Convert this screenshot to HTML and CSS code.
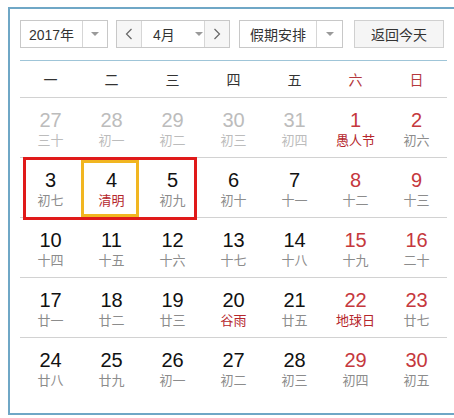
FILE: index.html
```html
<!DOCTYPE html>
<html lang="zh-CN">
<head>
<meta charset="utf-8">
<link rel="stylesheet" href="styles.css">
</head>
<body>
<div class="frame">
  <div class="toolbar">
    <div class="select year"><span class="label">2017年</span><span class="drop"><i class="tri"></i></span></div>
    <div class="month">
      <span class="nav"><svg width="8" height="12" viewBox="0 0 8 12"><polyline points="6.5,1 1.5,6 6.5,11" fill="none" stroke="#666" stroke-width="1.2"/></svg></span>
      <span class="mlabel">4月<i class="tri"></i></span>
      <span class="nav"><svg width="8" height="12" viewBox="0 0 8 12"><polyline points="1.5,1 6.5,6 1.5,11" fill="none" stroke="#666" stroke-width="1.2"/></svg></span>
    </div>
    <div class="select holiday"><span class="label">假期安排</span><span class="drop"><i class="tri"></i></span></div>
    <div class="today-btn">返回今天</div>
  </div>
  <div class="cal">
    <div class="head">
      <span>一</span><span>二</span><span>三</span><span>四</span><span>五</span><span class="we">六</span><span class="we">日</span>
    </div>
    <div class="row">
      <div class="cell other"><b>27</b><em>三十</em></div>
      <div class="cell other"><b>28</b><em>初一</em></div>
      <div class="cell other"><b>29</b><em>初二</em></div>
      <div class="cell other"><b>30</b><em>初三</em></div>
      <div class="cell other"><b>31</b><em>初四</em></div>
      <div class="cell we fest"><b>1</b><em>愚人节</em></div>
      <div class="cell we"><b>2</b><em>初六</em></div>
    </div>
    <div class="row">
      <div class="week-box"></div>
      <div class="cell"><b>3</b><em>初七</em></div>
      <div class="cell today fest"><b>4</b><em>清明</em></div>
      <div class="cell"><b>5</b><em>初九</em></div>
      <div class="cell"><b>6</b><em>初十</em></div>
      <div class="cell"><b>7</b><em>十一</em></div>
      <div class="cell we"><b>8</b><em>十二</em></div>
      <div class="cell we"><b>9</b><em>十三</em></div>
    </div>
    <div class="row">
      <div class="cell"><b>10</b><em>十四</em></div>
      <div class="cell"><b>11</b><em>十五</em></div>
      <div class="cell"><b>12</b><em>十六</em></div>
      <div class="cell"><b>13</b><em>十七</em></div>
      <div class="cell"><b>14</b><em>十八</em></div>
      <div class="cell we"><b>15</b><em>十九</em></div>
      <div class="cell we"><b>16</b><em>二十</em></div>
    </div>
    <div class="row">
      <div class="cell"><b>17</b><em>廿一</em></div>
      <div class="cell"><b>18</b><em>廿二</em></div>
      <div class="cell"><b>19</b><em>廿三</em></div>
      <div class="cell fest"><b>20</b><em>谷雨</em></div>
      <div class="cell"><b>21</b><em>廿五</em></div>
      <div class="cell we fest"><b>22</b><em>地球日</em></div>
      <div class="cell we"><b>23</b><em>廿七</em></div>
    </div>
    <div class="row">
      <div class="cell"><b>24</b><em>廿八</em></div>
      <div class="cell"><b>25</b><em>廿九</em></div>
      <div class="cell"><b>26</b><em>初一</em></div>
      <div class="cell"><b>27</b><em>初二</em></div>
      <div class="cell"><b>28</b><em>初三</em></div>
      <div class="cell we"><b>29</b><em>初四</em></div>
      <div class="cell we"><b>30</b><em>初五</em></div>
    </div>
  </div>
</div>
</body>
</html>
```
FILE: styles.css
```css
html, body {
  margin: 0;
  padding: 0;
  background: #fff;
  overflow: hidden;
}
body {
  font-family: "Liberation Sans", "Noto Sans CJK SC", Arial, sans-serif;
  color: #333;
}
.frame {
  margin: 7px 0 0 8px;
  width: 434px;
  height: 393px;
  border: 2px solid #6fa7c6;
  border-right: none;
  padding: 11px 0 0 10px;
  box-sizing: content-box;
}
.toolbar {
  display: flex;
  height: 28px;
  font-size: 14px;
  color: #333;
}
.select {
  display: flex;
  height: 28px;
  box-sizing: border-box;
  border: 1px solid #c8c8c8;
  background: #fff;
}
.select .label {
  display: flex;
  align-items: center;
  justify-content: center;
  border-right: 1px solid #d6d6d6;
}
.select .drop {
  display: flex;
  align-items: center;
  justify-content: center;
  flex: 1;
}
.year { width: 88px; }
.year .label { width: 61px; }
.holiday { width: 104px; margin-left: 9px; }
.holiday .label { width: 76px; }
.tri {
  display: inline-block;
  width: 0;
  height: 0;
  border-left: 4px solid transparent;
  border-right: 4px solid transparent;
  border-top: 4px solid #9a9a9a;
}
.month {
  display: flex;
  margin-left: 8px;
  width: 114px;
  height: 28px;
  box-sizing: border-box;
  border: 1px solid #c8c8c8;
}
.month .nav {
  width: 24px;
  display: flex;
  align-items: center;
  justify-content: center;
  background: #f6f6f6;
}
.month .mlabel {
  flex: 1;
  display: flex;
  align-items: center;
  padding-left: 11px;
  gap: 20px;
  border-left: 1px solid #d6d6d6;
  border-right: 1px solid #d6d6d6;
  background: #fff;
}
.today-btn {
  margin-left: 11px;
  width: 90px;
  height: 28px;
  box-sizing: border-box;
  border: 1px solid #d0d0d0;
  background: #f5f5f5;
  display: flex;
  align-items: center;
  justify-content: center;
}
.cal {
  margin-top: 12px;
  width: 427px;
  border-top: 1px solid #9fc5d8;
}
.head {
  display: grid;
  grid-template-columns: repeat(7, 61px);
  height: 36px;
  align-items: center;
  font-size: 14px;
  color: #333;
}
.head span {
  text-align: center;
}
.head .we { color: #b5383d; }
.row {
  position: relative;
  display: grid;
  grid-template-columns: repeat(7, 61px);
  height: 59px;
  border-top: 1px solid #d2d2d2;
}
.cell {
  position: relative;
  display: flex;
  flex-direction: column;
  align-items: center;
  padding-top: 11px;
}
.cell b {
  font-weight: normal;
  font-size: 20px;
  line-height: 22px;
  color: #111;
}
.cell em {
  font-style: normal;
  font-size: 13px;
  line-height: 18px;
  color: #8c8c8c;
  font-family: "Noto Sans CJK SC", sans-serif;
}
.cell.we b { color: #c5383d; }
.cell.fest em { color: #b5262c; }
.cell.other b { color: #bcbcbc; }
.cell.other em { color: #bcbcbc; }
.week-box {
  position: absolute;
  left: 3px;
  top: -1px;
  width: 174px;
  height: 63px;
  box-sizing: border-box;
  border: 3px solid #e01a1a;
  z-index: 1;
}
.cell.today::after {
  content: "";
  position: absolute;
  left: 0;
  top: 2px;
  width: 58px;
  height: 57px;
  box-sizing: border-box;
  border: 3px solid #f1b621;
  z-index: 2;
}
```
